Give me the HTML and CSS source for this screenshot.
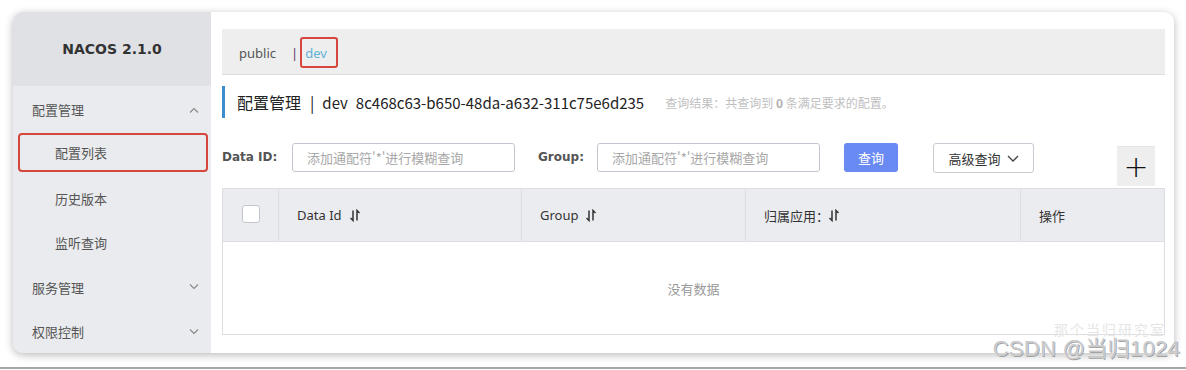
FILE: index.html
```html
<!DOCTYPE html>
<html lang="zh-CN">
<head>
    <meta charset="UTF-8">
    <title>Nacos 配置列表</title>
    <link rel="stylesheet" href="styles.css">
</head>
<body>
    <div class="page">
        <div class="card">
            <div class="sidebar">
                <div class="brand">NACOS 2.1.0</div>
                <div class="menu-item first">配置管理
                    <svg class="chev" viewBox="0 0 10 6" width="10" height="6"><path d="M1 5.5 5 1.5 9 5.5" /></svg>
                </div>
                <div class="menu-item sub active"><span class="hl">配置列表</span></div>
                <div class="menu-item sub after-active">历史版本</div>
                <div class="menu-item sub">监听查询</div>
                <div class="menu-item">服务管理
                    <svg class="chev" viewBox="0 0 10 6" width="10" height="6"><path d="M1 0.5 5 4.5 9 0.5" /></svg>
                </div>
                <div class="menu-item">权限控制
                    <svg class="chev" viewBox="0 0 10 6" width="10" height="6"><path d="M1 0.5 5 4.5 9 0.5" /></svg>
                </div>
            </div>

            <div class="main">
                <div class="ns-bar">
                    <span class="ns">public</span>
                    <span class="ns-sep">|</span>
                    <span class="ns-box"><span class="ns current">dev</span></span>
                </div>

                <div class="title-row">
                    <span class="title">配置管理</span>
                    <span class="title-sep">|</span>
                    <span class="title-id">dev</span>
                    <span class="title-id ns-id">8c468c63-b650-48da-a632-311c75e6d235</span>
                    <span class="result">查询结果：共查询到 <b>0</b> 条满足要求的配置。</span>
                </div>

                <div class="filter-row">
                    <label class="lbl">Data ID:</label>
                    <div class="input">添加通配符'*'进行模糊查询</div>
                    <label class="lbl lbl-group">Group:</label>
                    <div class="input">添加通配符'*'进行模糊查询</div>
                    <button class="btn-primary">查询</button>
                    <button class="btn-adv">高级查询
                        <svg viewBox="0 0 12 7" width="12" height="7"><path d="M1 1 6 6 11 1" /></svg>
                    </button>
                    <button class="btn-add">+</button>
                </div>

                <div class="table">
                    <div class="thead">
                        <div class="th col-check"><span class="checkbox"></span></div>
                        <div class="th col-id">Data Id <svg class="sort" viewBox="0 0 10 12" width="10" height="13"><path d="M3 1v10L0.5 8.5M7 11V1l2.5 2.5" /></svg></div>
                        <div class="th col-group">Group <svg class="sort" viewBox="0 0 10 12" width="10" height="13"><path d="M3 1v10L0.5 8.5M7 11V1l2.5 2.5" /></svg></div>
                        <div class="th col-app">归属应用： <svg class="sort" viewBox="0 0 10 12" width="10" height="13"><path d="M3 1v10L0.5 8.5M7 11V1l2.5 2.5" /></svg></div>
                        <div class="th col-op">操作</div>
                    </div>
                    <div class="tbody">没有数据</div>
                </div>
            </div>
        </div>
        <div class="watermark"><span class="wm-back">那个当归研究室</span>CSDN @当归1024</div>
    </div>
    <div class="bottom-line"></div>
</body>
</html>
```

FILE: styles.css
```css
body {
    margin: 0;
    background-color: #ffffff;
    font-family: "Noto Sans", "Noto Sans CJK SC", sans-serif;
    color: #333333;
    width: 1186px;
    height: 370px;
    overflow: hidden;
}

.page {
    position: relative;
    height: 367px;
    padding: 12px 0 0 13px;
    box-sizing: border-box;
}

.card {
    width: 1161px;
    height: 341px;
    display: flex;
    background-color: #ffffff;
    border-radius: 10px;
    overflow: hidden;
    box-shadow: 0 2px 8px rgba(0, 0, 0, 0.28);
}

.sidebar {
    width: 198px;
    flex-shrink: 0;
    background-color: #eaebee;
    display: flex;
    flex-direction: column;
}

.brand {
    height: 74px;
    flex-shrink: 0;
    background-color: #dfe1e5;
    display: flex;
    align-items: center;
    justify-content: center;
    font-family: "DejaVu Sans", sans-serif;
    font-weight: bold;
    font-size: 14px;
    color: #333333;
}

.menu-item {
    box-sizing: border-box;
    height: 44.5px;
    display: flex;
    align-items: center;
    justify-content: space-between;
    padding: 0 12px 0 19px;
    font-family: "Noto Sans CJK SC", sans-serif;
    font-size: 13px;
    color: #555555;
    flex-shrink: 0;
}

.menu-item.first {
    height: 47px;
}

.menu-item.sub {
    padding-left: 42px;
}

.menu-item.active {
    height: 39px;
    padding: 0 3px 0 5px;
}

.menu-item.after-active {
    margin-top: 4px;
}

.hl {
    flex: 1;
    height: 39px;
    box-sizing: border-box;
    display: flex;
    align-items: center;
    padding-left: 35px;
    border: 2px solid #d5473c;
    border-radius: 4px;
}

.chev {
    fill: none;
    stroke: #888888;
    stroke-width: 1.1;
}

.main {
    flex: 1;
    padding: 17px 9px 0 11px;
    display: flex;
    flex-direction: column;
}

.ns-bar {
    height: 46px;
    box-sizing: border-box;
    background-color: #eeeeee;
    border-bottom: 1px solid #dddddd;
    display: flex;
    align-items: center;
    padding: 2px 0 0 17px;
    font-size: 13px;
}

.ns {
    color: #555555;
}

.ns-sep {
    margin-left: 15px;
    color: #5a3c6e;
}

.ns-box {
    margin-left: 2px;
    width: 38px;
    height: 31px;
    box-sizing: border-box;
    border: 2px solid #d5473c;
    border-radius: 3px;
    display: flex;
    align-items: center;
    padding-left: 3px;
}

.ns.current {
    color: #5fb3d6;
}

.title-row {
    margin-top: 11px;
    height: 32px;
    border-left: 3px solid #3c8dcc;
    display: flex;
    align-items: center;
    padding-left: 12px;
    font-family: "Noto Sans CJK SC", sans-serif;
    color: #222222;
}

.title {
    font-size: 16px;
}

.title-sep {
    font-size: 16px;
    margin: 0 8px 0 9px;
}

.title-id {
    font-size: 15px;
}

.ns-id {
    margin-left: 8px;
}

.result {
    margin-left: 21px;
    font-size: 12px;
    color: #c0c0c0;
}

.result b {
    color: #b0b0b0;
}

.filter-row {
    margin-top: 25px;
    display: flex;
    align-items: flex-start;
    height: 45px;
}

.lbl {
    height: 29px;
    line-height: 29px;
    font-family: "DejaVu Sans", sans-serif;
    font-weight: bold;
    font-size: 12px;
    color: #555555;
    width: 70px;
}

.lbl-group {
    margin-left: 23px;
    width: 59px;
}

.input {
    width: 223px;
    height: 29px;
    box-sizing: border-box;
    border: 1px solid #c4c6cf;
    border-radius: 3px;
    padding-left: 14px;
    line-height: 27px;
    font-family: "Noto Sans CJK SC", sans-serif;
    font-size: 13px;
    color: #a8a8a8;
}

.btn-primary {
    margin-left: 24px;
    width: 54px;
    height: 29px;
    border: none;
    border-radius: 3px;
    background-color: #6a8af3;
    color: #ffffff;
    font-family: "Noto Sans CJK SC", sans-serif;
    font-size: 13px;
    padding: 0;
}

.btn-adv {
    margin-left: 35px;
    width: 101px;
    height: 30px;
    border: 1px solid #c9cbd3;
    border-radius: 3px;
    background-color: #ffffff;
    color: #333333;
    font-family: "Noto Sans CJK SC", sans-serif;
    font-size: 13px;
    display: flex;
    align-items: center;
    justify-content: center;
    gap: 6px;
    padding: 0;
}

.btn-adv svg {
    fill: none;
    stroke: #444444;
    stroke-width: 1.3;
}

.btn-add {
    margin-left: 83px;
    margin-top: 3px;
    width: 38px;
    height: 40px;
    border: none;
    border-top: 1px solid #e4e4e4;
    background-color: #eeeeee;
    font-family: "DejaVu Sans", sans-serif;
    font-size: 30px;
    font-weight: 300;
    line-height: 36px;
    color: #111111;
    padding: 0;
}

.table {
    width: 943px;
    border: 1px solid #dcdee3;
    box-sizing: border-box;
    height: 147px;
    display: flex;
    flex-direction: column;
}

.thead {
    height: 52px;
    background-color: #ebecf0;
    border-bottom: 1px solid #dcdee3;
    display: flex;
}

.th {
    display: flex;
    align-items: center;
    gap: 8px;
    padding-left: 18px;
    font-size: 13px;
    color: #333333;
    border-right: 1px solid #dcdee3;
    box-sizing: border-box;
}

.th:last-child {
    border-right: none;
}

.col-check {
    width: 56px;
    padding-left: 19px;
    align-items: flex-start;
    padding-top: 16px;
}

.checkbox {
    width: 16px;
    height: 16px;
    background-color: #ffffff;
    border: 1px solid #c4c6cf;
    border-radius: 3px;
}

.col-id {
    width: 243px;
}

.col-group {
    width: 224px;
}

.col-app {
    width: 275px;
    font-family: "Noto Sans CJK SC", sans-serif;
    gap: 0;
}

.col-op {
    flex: 1;
    font-family: "Noto Sans CJK SC", sans-serif;
}

.sort {
    fill: none;
    stroke: #333333;
    stroke-width: 1.5;
}

.tbody {
    flex: 1;
    display: flex;
    align-items: center;
    justify-content: center;
    font-family: "Noto Sans CJK SC", sans-serif;
    font-size: 13px;
    color: #999999;
}

.watermark {
    position: absolute;
    right: 6px;
    top: 337px;
    line-height: 24px;
    font-family: "Liberation Sans", "Noto Sans CJK SC", sans-serif;
    font-size: 22px;
    color: #c8c8c8;
    letter-spacing: 0.3px;
    text-shadow: 0 0 1px #ffffff, 1px 1px 0 #999999;
}

.wm-back {
    position: absolute;
    right: 14px;
    top: -14px;
    line-height: 14px;
    font-size: 14px;
    color: #e6e6e6;
    text-shadow: none;
    letter-spacing: 2px;
}

.bottom-line {
    height: 2px;
    background-color: #a6a6a6;
}
```
